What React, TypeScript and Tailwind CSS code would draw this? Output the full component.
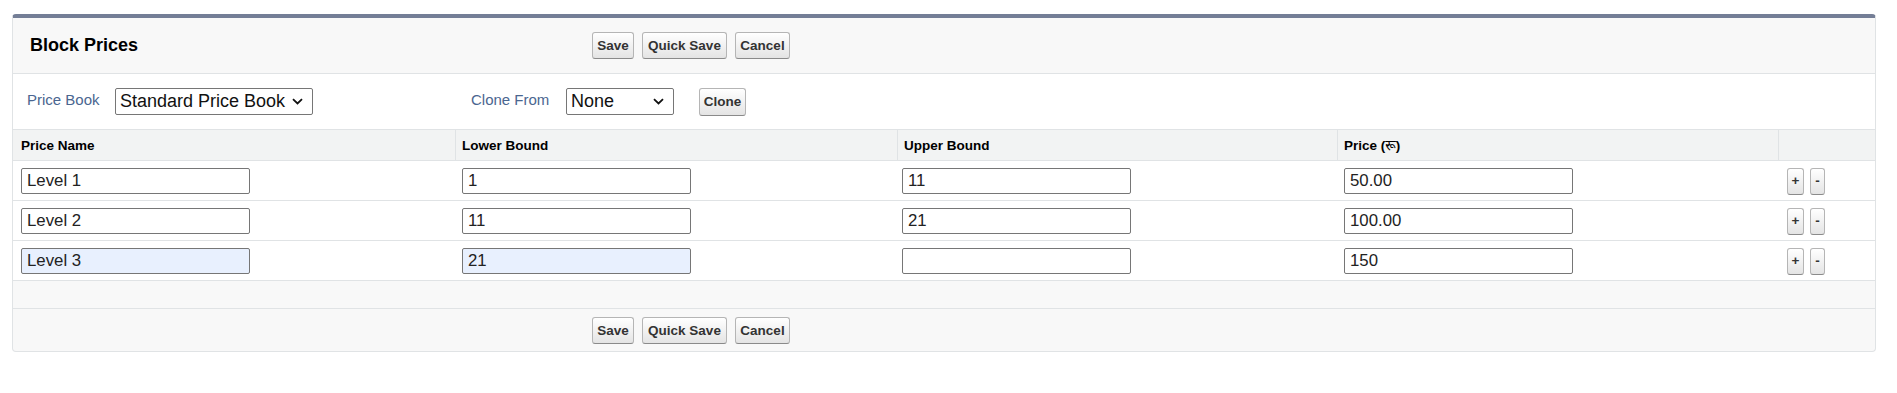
import React from "react";

const btnBase =
  "h-[27px] rounded-[3px] border border-[#b5b5b5] border-b-[#8a8a8a] bg-linear-to-b from-white to-[#e4e4e4] text-[13.5px] font-bold text-[#333] leading-none flex items-center justify-center";

function ActionButtons() {
  return (
    <div className="flex items-center gap-[8px]">
      <button className={`${btnBase} w-[42px]`}>Save</button>
      <button className={`${btnBase} w-[85px]`}>Quick Save</button>
      <button className={`${btnBase} w-[55px]`}>Cancel</button>
    </div>
  );
}

function Chevron() {
  return (
    <svg width="11" height="7" viewBox="0 0 11 7" className="shrink-0">
      <path d="M1 1.2 L5.5 5.5 L10 1.2" fill="none" stroke="#111" strokeWidth="1.8" />
    </svg>
  );
}

function FakeSelect({ value, width }: { value: string; width: string }) {
  return (
    <div
      className={`${width} h-[27px] flex items-center justify-between border border-[#767676] rounded-[2px] bg-white pl-[4px] pr-[9px] text-[18px] text-[#111]`}
    >
      <span>{value}</span>
      <Chevron />
    </div>
  );
}

function Field({ value, filled }: { value: string; filled?: boolean }) {
  return (
    <input
      readOnly
      value={value}
      className={`w-[229px] h-[26px] border border-[#767676] rounded-[2px] px-[5px] text-[16.8px] text-[#222] outline-none font-['Liberation_Sans',Arial,sans-serif] ${
        filled ? "bg-[#e8f0fe]" : "bg-white"
      }`}
    />
  );
}

const rows = [
  { name: "Level 1", lower: "1", upper: "11", price: "50.00", filled: false },
  { name: "Level 2", lower: "11", upper: "21", price: "100.00", filled: false },
  { name: "Level 3", lower: "21", upper: "", price: "150", filled: true },
];

const gridCols = "grid grid-cols-[442px_442px_440px_441px_1fr]";

export default function App() {
  return (
    <div className="min-h-[393px] bg-white pt-[14px] pl-[12px] font-['Liberation_Sans','Noto_Sans',Arial,sans-serif]">
      <div className="w-[1864px] rounded-[4px] border border-[#e0e3e5] border-t-[4px] border-t-[#747e96] bg-[#f8f8f8] overflow-hidden">
        {/* Header */}
        <div className="flex h-[56px] items-center border-b border-[#e0e3e5]">
          <div className="w-[579px] pl-[17px] text-[18px] font-bold text-black">Block Prices</div>
          <ActionButtons />
        </div>

        {/* Price book row */}
        <div className="flex h-[56px] items-center bg-white border-b border-[#e0e3e5] pl-[14px]">
          <div className="w-[88px] text-[15px] text-[#4a6690] -mt-[2px]">Price Book</div>
          <FakeSelect value="Standard Price Book" width="w-[198px]" />
          <div className="ml-[158px] w-[95px] text-[15px] text-[#4a6690] -mt-[2px]">Clone From</div>
          <FakeSelect value="None" width="w-[108px]" />
          <button className={`${btnBase} ml-[25px] w-[47px] h-[28px]`}>Clone</button>
        </div>

        {/* Table header */}
        <div className={`${gridCols} h-[31px] bg-[#f2f3f3] border-b border-[#e0e3e5] text-[13.5px] font-bold text-black`}>
          <div className="flex items-center pl-[8px] pt-[2px]">Price Name</div>
          <div className="flex items-center pl-[6px] pt-[2px] border-l border-[#e0e3e5]">Lower Bound</div>
          <div className="flex items-center pl-[6px] pt-[2px] border-l border-[#e0e3e5]">Upper Bound</div>
          <div className="flex items-center pl-[6px] pt-[2px] border-l border-[#e0e3e5]">
            Price (<span className="font-normal">रू</span> )
          </div>
          <div className="border-l border-[#e0e3e5]" />
        </div>

        {/* Rows */}
        {rows.map((r) => (
          <div key={r.name} className={`${gridCols} h-[40px] bg-white border-b border-[#e0e3e5]`}>
            <div className="flex items-center pl-[8px] pt-[1px]">
              <Field value={r.name} filled={r.filled} />
            </div>
            <div className="flex items-center pl-[7px] pt-[1px]">
              <Field value={r.lower} filled={r.filled} />
            </div>
            <div className="flex items-center pl-[5px] pt-[1px]">
              <Field value={r.upper} />
            </div>
            <div className="flex items-center pl-[7px] pt-[1px]">
              <Field value={r.price} />
            </div>
            <div className="flex items-center pl-[9px] gap-[6px] pt-[1px]">
              <button className={`${btnBase} w-[17px] text-[12px]`}>+</button>
              <button className={`${btnBase} w-[15px] text-[12px]`}>-</button>
            </div>
          </div>
        ))}

        {/* Spacer */}
        <div className="h-[28px] border-b border-[#e0e3e5]" />

        {/* Footer */}
        <div className="flex h-[42px] items-start pt-[8px] pl-[579px]">
          <ActionButtons />
        </div>
      </div>
    </div>
  );
}
